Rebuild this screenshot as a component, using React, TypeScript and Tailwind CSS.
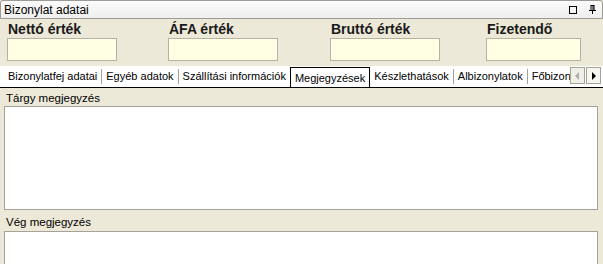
const FIELDS = [
  { label: 'Nettó érték', col: 'w-[161px]', input: 'w-[110px]' },
  { label: 'ÁFA érték', col: 'w-[162px]', input: 'w-[110px]' },
  { label: 'Bruttó érték', col: 'w-[156px]', input: 'w-[110px]' },
  { label: 'Fizetendő', col: 'w-[110px]', input: 'w-[95px]' },
]

const TABS = [
  'Bizonylatfej adatai',
  'Egyéb adatok',
  'Szállítási információk',
  'Megjegyzések',
  'Készlethatások',
  'Albizonylatok',
  'Főbizonylatok',
]

const ACTIVE = 'Megjegyzések'

export default function App() {
  return (
    <div className="flex h-[264px] w-[603px] flex-col overflow-hidden bg-[#ece9d8] font-['Liberation_Sans',Arial,sans-serif] text-[11px] text-black">
      {/* title bar */}
      <div className="flex h-[19px] shrink-0 items-center justify-between rounded-t-[3px] border border-[#9c9a94] bg-gradient-to-b from-[#fbfbfb] to-[#efefef] pl-[3px] pr-[6px]">
        <span className="text-[12px] leading-none">Bizonylat adatai</span>
        <div className="flex items-center gap-[12px]">
          <span className="h-[8px] w-[8px] border border-black" />
          <svg width="7" height="9" viewBox="0 0 7 9" className="block">
            <path d="M1.5 0.5h4M2 0.5v5M5 0.5v5M4 0.5v5M0 5.5h7M3.5 5.5v3.5" stroke="#000" strokeWidth="1" fill="none" />
          </svg>
        </div>
      </div>

      {/* totals */}
      <div className="flex shrink-0 pl-[7px] pt-[1px]">
        {FIELDS.map((f) => (
          <div key={f.label} className={`flex shrink-0 flex-col ${f.col}`}>
            <span className="h-[18px] pl-[1px] text-[14px] font-bold leading-[18px] text-[#1a1a1a]">{f.label}</span>
            <div className={`h-[23px] border border-[#b5b2a8] bg-[#ffffe4] ${f.input}`} />
          </div>
        ))}
      </div>

      {/* tab strip */}
      <div className="mt-[5px] flex h-[22px] shrink-0 items-end border-b border-black bg-white">
        <div className="flex h-full min-w-0 flex-1 items-end overflow-hidden pl-[4px]">
          {TABS.map((t, i) =>
            t === ACTIVE ? (
              <div key={t} className="relative -mb-px flex h-[21px] shrink-0 items-center border border-b-0 border-black bg-white px-[4px] text-[11px]">
                {t}
              </div>
            ) : (
              <div key={t} className="flex h-full shrink-0 items-center text-[11px]">
                <span className="px-[4px]">{t}</span>
                {i < TABS.length - 1 && TABS[i + 1] !== ACTIVE && <span className="h-[15px] w-px bg-[#a0a0a0]" />}
              </div>
            ),
          )}
        </div>
        <div className="mb-[3px] mr-[2px] flex shrink-0 gap-px self-end">
          <div className="flex h-[17px] w-[15px] items-center justify-center border border-[#a5a29b] bg-[#f0efe8]">
            <svg width="5" height="8" viewBox="0 0 5 8"><path d="M4 0v8L0 4z" fill="#b0ada4" /></svg>
          </div>
          <div className="flex h-[17px] w-[15px] items-center justify-center border border-[#a5a29b] bg-[#f6f5f0]">
            <svg width="5" height="8" viewBox="0 0 5 8"><path d="M1 0v8l4-4z" fill="#000" /></svg>
          </div>
        </div>
      </div>

      {/* notes */}
      <div className="flex flex-1 flex-col px-[4px] pr-[5px]">
        <span className="mt-[3px] h-[14px] pl-[2px] text-[11.5px] leading-[14px]">Tárgy megjegyzés</span>
        <div className="mt-[1px] h-[104px] shrink-0 border border-[#a5a29b] bg-white" />
        <span className="mt-[5px] h-[14px] pl-[2px] text-[11.5px] leading-[14px]">Vég megjegyzés</span>
        <div className="mt-[2px] flex-1 border border-[#a5a29b] border-b-0 bg-white" />
      </div>
    </div>
  )
}
